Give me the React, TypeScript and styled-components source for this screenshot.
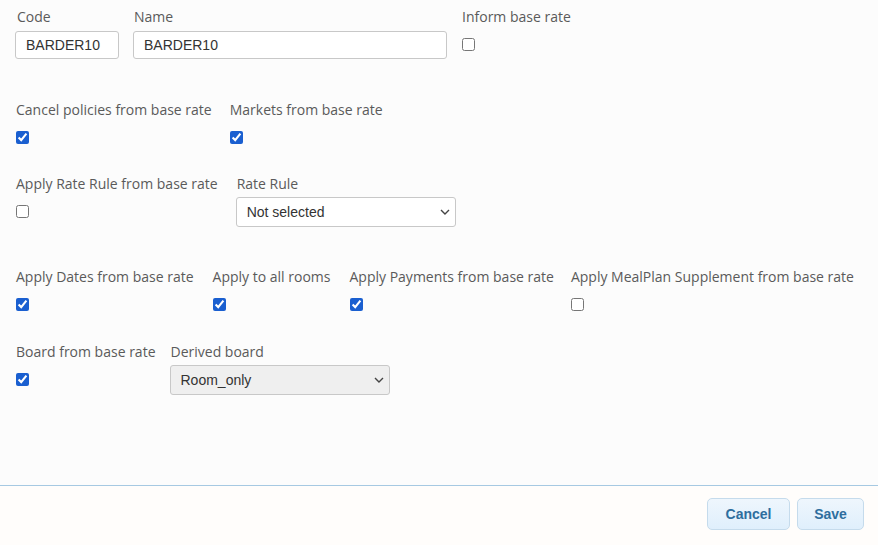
import React from "react";
import styled, { createGlobalStyle } from "styled-components";

const Global = createGlobalStyle`
  html, body { margin: 0; padding: 0; background: #fcfcfc; }
  * { box-sizing: border-box; }
`;

const Page = styled.div`
  width: 878px;
  height: 545px;
  display: flex;
  flex-direction: column;
  background: #fcfcfc;
  font-family: "Open Sans", "Noto Sans", sans-serif;
`;

const Form = styled.div`
  flex: 1;
  padding: 7px 16px 0 15px;
`;

const Row = styled.div<{ $gap?: number; $mb?: number }>`
  display: flex;
  align-items: flex-start;
  gap: ${(p) => p.$gap ?? 16}px;
  margin-bottom: ${(p) => p.$mb ?? 30}px;
`;

const Field = styled.div<{ $ml?: number }>`
  display: flex;
  flex-direction: column;
  align-items: flex-start;
  margin-left: ${(p) => p.$ml ?? 0}px;
`;

const Label = styled.label<{ $indent?: number }>`
  display: block;
  font-size: 14px;
  line-height: 20px;
  height: 20px;
  color: #5a5a5a;
  white-space: nowrap;
  padding-left: ${(p) => p.$indent ?? 0}px;
`;

const TextInput = styled.input<{ $w: number }>`
  display: block;
  width: ${(p) => p.$w}px;
  height: 28px;
  margin: 4px 0 10px;
  padding: 0 10px;
  border: 1px solid #c8c8c8;
  border-radius: 3px;
  background: #fff;
  font-family: "Liberation Sans", Arial, sans-serif;
  font-size: 14px;
  color: #333;
  outline: none;
`;

const Check = styled.input.attrs({ type: "checkbox" })<{ $ml?: number }>`
  display: block;
  width: 13px;
  height: 13px;
  margin: 11px 0 0 ${(p) => p.$ml ?? 1}px;
  accent-color: #1a5fd0;
`;

const SelectWrap = styled.div`
  position: relative;
  margin: 3px 0 10px;
  height: 30px;
`;

const Select = styled.select<{ $w: number; $bg?: string }>`
  display: block;
  appearance: none;
  -webkit-appearance: none;
  width: ${(p) => p.$w}px;
  height: 30px;
  padding: 0 10px;
  border: 1px solid #c8c8c8;
  border-radius: 3px;
  background: ${(p) => p.$bg ?? "#fff"};
  font-family: "Liberation Sans", Arial, sans-serif;
  font-size: 14px;
  color: #333;
  outline: none;
`;

const Chevron = styled.svg`
  position: absolute;
  right: 6px;
  top: 12px;
  pointer-events: none;
`;

const Footer = styled.div`
  border-top: 1px solid #a6c9e2;
  background: #fffdfb;
  height: 60px;
  display: flex;
  justify-content: flex-end;
  align-items: flex-start;
  gap: 7px;
  padding: 12px 14px 0 0;
`;

const Button = styled.button<{ $w: number }>`
  width: ${(p) => p.$w}px;
  height: 32px;
  border: 1px solid #c5dbec;
  border-radius: 5px;
  background: linear-gradient(#eef6fd, #dfeffc);
  color: #2e6e9e;
  font-family: "Liberation Sans", Arial, sans-serif;
  font-weight: bold;
  font-size: 14px;
  padding: 0;
  cursor: pointer;
`;

const Arrow = () => (
  <Chevron width="10" height="6" viewBox="0 0 10 6">
    <path d="M1 1 L5 5 L9 1" fill="none" stroke="#444" strokeWidth="1.4" />
  </Chevron>
);

const CheckField = ({
  label,
  checked,
  ml,
}: {
  label: string;
  checked?: boolean;
  ml?: number;
}) => (
  <Field $ml={ml}>
    <Label $indent={1}>{label}</Label>
    <Check defaultChecked={checked} />
  </Field>
);

export default function App() {
  return (
    <Page>
      <Global />
      <Form>
        <Row $gap={14} $mb={31}>
          <Field>
            <Label $indent={2}>Code</Label>
            <TextInput $w={104} defaultValue="BARDER10" />
          </Field>
          <Field>
            <Label $indent={1}>Name</Label>
            <TextInput $w={314} defaultValue="BARDER10" />
          </Field>
          <Field $ml={1}>
            <Label>Inform base rate</Label>
            <Check $ml={0} />
          </Field>
        </Row>
        <Row $gap={17}>
          <CheckField label="Cancel policies from base rate" checked />
          <CheckField label="Markets from base rate" checked />
        </Row>
        <Row $gap={18}>
          <CheckField label="Apply Rate Rule from base rate" />
          <Field>
            <Label $indent={1}>Rate Rule</Label>
            <SelectWrap>
              <Select $w={220} defaultValue="ns">
                <option value="ns">Not selected</option>
              </Select>
              <Arrow />
            </SelectWrap>
          </Field>
        </Row>
        <Row $gap={18} $mb={31}>
          <CheckField label="Apply Dates from base rate" checked />
          <CheckField label="Apply to all rooms" checked />
          <CheckField label="Apply Payments from base rate" checked />
          <CheckField label="Apply MealPlan Supplement from base rate" ml={-2} />
        </Row>
        <Row $gap={14}>
          <CheckField label="Board from base rate" checked />
          <Field>
            <Label $indent={1}>Derived board</Label>
            <SelectWrap>
              <Select $w={220} $bg="#efefef" defaultValue="ro">
                <option value="ro">Room_only</option>
              </Select>
              <Arrow />
            </SelectWrap>
          </Field>
        </Row>
      </Form>
      <Footer>
        <Button $w={83}>Cancel</Button>
        <Button $w={67}>Save</Button>
      </Footer>
    </Page>
  );
}
